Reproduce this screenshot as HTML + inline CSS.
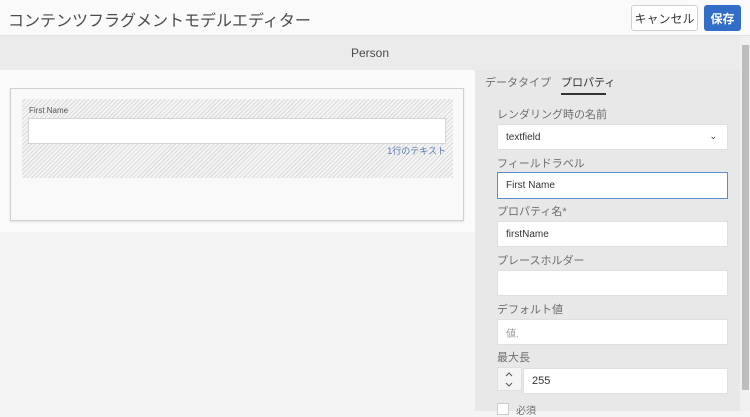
<!DOCTYPE html>
<html><head><meta charset="utf-8"><style>
*{box-sizing:border-box;margin:0;padding:0}
body{width:750px;height:411px;overflow:hidden;background:#f4f4f4;font-family:"Liberation Sans","Noto Sans CJK JP",sans-serif;position:relative;color:#4b4b4b}
.a{position:absolute}
.hdr{left:0;top:0;width:750px;height:36px;background:#fafafa;border-bottom:1px solid #e4e4e4}
.title{left:8px;top:7px;font-size:16px;color:#4b4b4b}
.btn{top:5px;height:26px;border-radius:3px;font-size:12px;display:flex;align-items:center;justify-content:center}
.bar{left:0;top:36px;width:740px;height:34px;background:#ebebeb;font-size:12px;display:flex;align-items:center;justify-content:center;color:#4b4b4b}
.white{left:0;top:70px;width:475px;height:162px;background:#fafafa}
.card{left:10px;top:88px;width:454px;height:133px;border:1px solid #cfcfcf;background:#f9f9f9;box-shadow:0 1px 2px rgba(0,0,0,.1)}
.hatch{left:22px;top:99px;width:431px;height:79px;background:repeating-linear-gradient(135deg,#f4f4f4 0 2px,#dadada 2px 3px)}
.rp{left:475px;top:70px;width:265px;height:341px;background:#e8e8e8}
.lbl{font-size:11px;color:#6e6e6e}
.inp{left:497px;width:231px;height:26px;background:#fff;border:1px solid #e0e0e0;font-size:10px;display:flex;align-items:center;padding-left:8px;color:#333}
.sb{left:740px;top:36px;width:10px;height:375px;background:#f0f0f0}
</style></head><body>
<div class="a hdr"></div>
<div class="a title">コンテンツフラグメントモデルエディター</div>
<div class="a btn" style="left:631px;width:67px;background:#fff;border:1px solid #d0d0d0;color:#333">キャンセル</div>
<div class="a btn" style="left:704px;width:37px;background:#326ec8;color:#fff;font-weight:bold">保存</div>
<div class="a bar">Person</div>
<div class="a white"></div>
<div class="a card"></div>
<div class="a hatch"></div>
<div class="a" style="left:29px;top:106px;font-size:8px;color:#555">First Name</div>
<div class="a" style="left:28px;top:118px;width:418px;height:26px;background:#fff;border:1px solid #d4d4d4"></div>
<div class="a" style="left:380px;top:144px;width:66px;text-align:right;font-size:9px;color:#5a7ab0">1行のテキスト</div>
<div class="a rp"></div>
<div class="a" style="left:485px;top:74px;font-size:11px;color:#6e6e6e">データタイプ</div>
<div class="a" style="left:561px;top:74px;font-size:11px;color:#333">プロパティ</div>
<div class="a" style="left:561px;top:93px;width:45px;height:2px;background:#333"></div>
<div class="a lbl" style="left:497px;top:106px">レンダリング時の名前</div>
<div class="a inp" style="top:124px">textfield<span style="position:absolute;right:10px;top:6px;font-size:9px">⌄</span></div>
<div class="a lbl" style="left:497px;top:155px">フィールドラベル</div>
<div class="a inp" style="top:172px;border:1px solid #5b8ccf;height:27px">First Name</div>
<div class="a lbl" style="left:497px;top:203px">プロパティ名*</div>
<div class="a inp" style="top:221px">firstName</div>
<div class="a lbl" style="left:497px;top:252px">プレースホルダー</div>
<div class="a inp" style="top:270px"></div>
<div class="a lbl" style="left:497px;top:301px">デフォルト値</div>
<div class="a inp" style="top:319px;color:#999">値.</div>
<div class="a lbl" style="left:497px;top:349px">最大長</div>
<div class="a" style="left:497px;top:367px;width:25px;height:24px;background:#f4f4f4;border:1px solid #e0e0e0"></div>
<svg class="a" style="left:497px;top:367px" width="25" height="24"><path d="M9 9l3-3 3 3M9 16l3 3 3-3" fill="none" stroke="#555" stroke-width="1"/></svg>
<div class="a inp" style="left:523px;top:368px;width:205px;font-size:11px">255</div>
<div class="a" style="left:497px;top:403px;width:12px;height:12px;background:#fff;border:1px solid #ccc"></div>
<div class="a lbl" style="left:516px;top:402px;font-size:10px">必須</div>
<div class="a sb"></div>
<div class="a" style="left:742px;top:45px;width:7px;height:345px;background:#bdbdbd"></div>
</body></html>
